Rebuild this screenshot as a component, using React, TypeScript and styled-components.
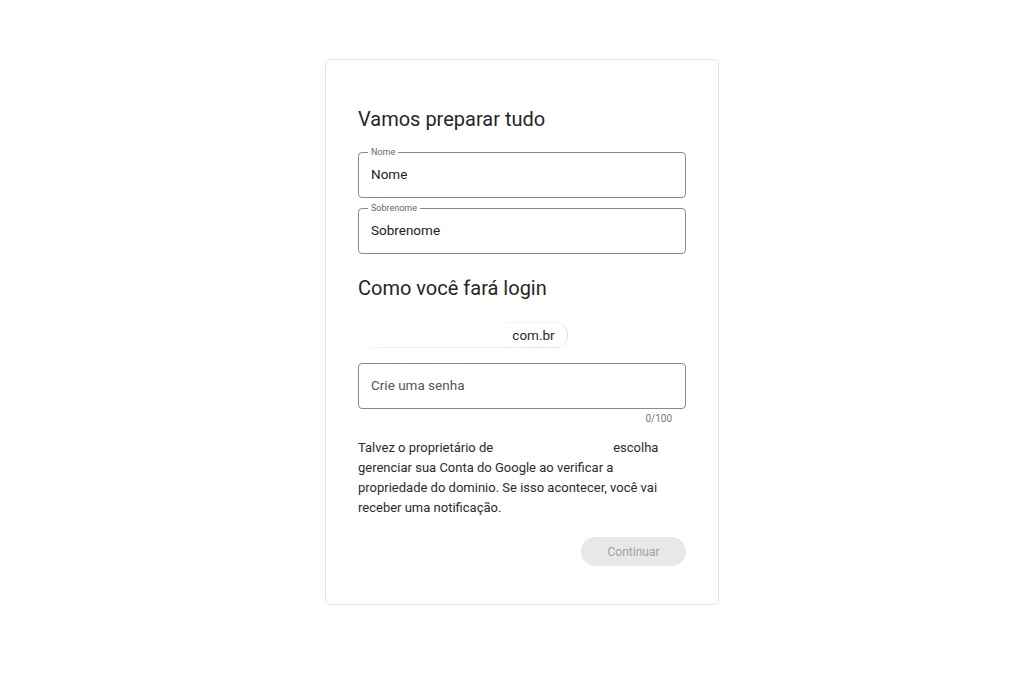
import React from "react";
import styled, { createGlobalStyle } from "styled-components";

const GlobalStyle = createGlobalStyle`
  html, body {
    margin: 0;
    padding: 0;
    background: #ffffff;
    font-family: Roboto, "Liberation Sans", Arial, sans-serif;
    color: #202124;
  }
`;

const Page = styled.div`
  display: flex;
  justify-content: center;
  align-items: flex-start;
  padding: 59px 0 0 20px;
  min-height: 683px;
  box-sizing: border-box;
`;

const Card = styled.div`
  width: 394px;
  box-sizing: border-box;
  padding: 47px 32px 38px 32px;
  border: 1px solid #e3e3e3;
  border-radius: 6px;
  display: flex;
  flex-direction: column;
`;

const Title = styled.h1<{ $top: number }>`
  margin: ${(p) => p.$top}px 0 0 0;
  font-size: 20px;
  line-height: 24px;
  font-weight: 400;
  color: #262626;
`;

const Field = styled.div<{ $top: number }>`
  position: relative;
  margin-top: ${(p) => p.$top}px;
  height: 46px;
  box-sizing: border-box;
  border: 1px solid #8a8a8a;
  border-radius: 4px;
  display: flex;
  align-items: center;
  padding: 0 12px 3px 12px;
`;

const FloatLabel = styled.span`
  position: absolute;
  left: 9px;
  top: -6px;
  padding: 0 3px;
  background: #ffffff;
  font-size: 9px;
  line-height: 10px;
  color: #666666;
`;

const Value = styled.span<{ $muted?: boolean }>`
  font-size: 13.5px;
  color: ${(p) => (p.$muted ? "#555555" : "#222222")};
`;

const EmailRow = styled.div`
  margin-top: 22px;
  width: 210px;
  height: 26px;
  display: flex;
  justify-content: flex-end;
  position: relative;
  &::after {
    content: "";
    position: absolute;
    left: 12px;
    right: 8px;
    bottom: 0;
    height: 1px;
    background: linear-gradient(to right, #f3f3f3, #e6e6e6);
  }
`;

const DomainPill = styled.span`
  width: 62px;
  height: 26px;
  box-sizing: border-box;
  border-right: 1px solid #e2e2e2;
  border-top: 1px solid #f4f4f4;
  border-radius: 0 13px 13px 0;
  display: flex;
  align-items: center;
  justify-content: center;
  padding: 0 6px 2px 0;
  font-size: 13.5px;
  color: #2a2a2a;
`;

const Counter = styled.div`
  margin-top: 4px;
  text-align: right;
  padding-right: 14px;
  font-size: 10px;
  line-height: 12px;
  color: #777777;
`;

const Notice = styled.div`
  margin: 13px 0 0 0;
  font-size: 13px;
  line-height: 20px;
  color: #2b2b2b;
  padding-right: 12px;
`;

const NoticeFirstLine = styled.div`
  display: flex;
  gap: 120px;
`;

const Actions = styled.div`
  margin-top: 19px;
  display: flex;
  justify-content: flex-end;
`;

const ContinueButton = styled.button`
  width: 105px;
  height: 29px;
  border: none;
  border-radius: 15px;
  background: #e8e8e8;
  color: #a0a0a0;
  font-family: Roboto, "Liberation Sans", Arial, sans-serif;
  font-size: 12px;
  cursor: default;
`;

export default function App() {
  return (
    <>
      <GlobalStyle />
      <Page>
        <Card>
          <Title $top={0}>Vamos preparar tudo</Title>
          <Field $top={21}>
            <FloatLabel>Nome</FloatLabel>
            <Value>Nome</Value>
          </Field>
          <Field $top={10}>
            <FloatLabel>Sobrenome</FloatLabel>
            <Value>Sobrenome</Value>
          </Field>
          <Title $top={22}>Como você fará login</Title>
          <EmailRow>
            <DomainPill>com.br</DomainPill>
          </EmailRow>
          <Field $top={15}>
            <Value $muted>Crie uma senha</Value>
          </Field>
          <Counter>0/100</Counter>
          <Notice>
            <NoticeFirstLine>
              <span>Talvez o proprietário de</span>
              <span>escolha</span>
            </NoticeFirstLine>
            <div>
              gerenciar sua Conta do Google ao verificar a propriedade do
              dominio. Se isso acontecer, você vai receber uma notificação.
            </div>
          </Notice>
          <Actions>
            <ContinueButton disabled>Continuar</ContinueButton>
          </Actions>
        </Card>
      </Page>
    </>
  );
}
